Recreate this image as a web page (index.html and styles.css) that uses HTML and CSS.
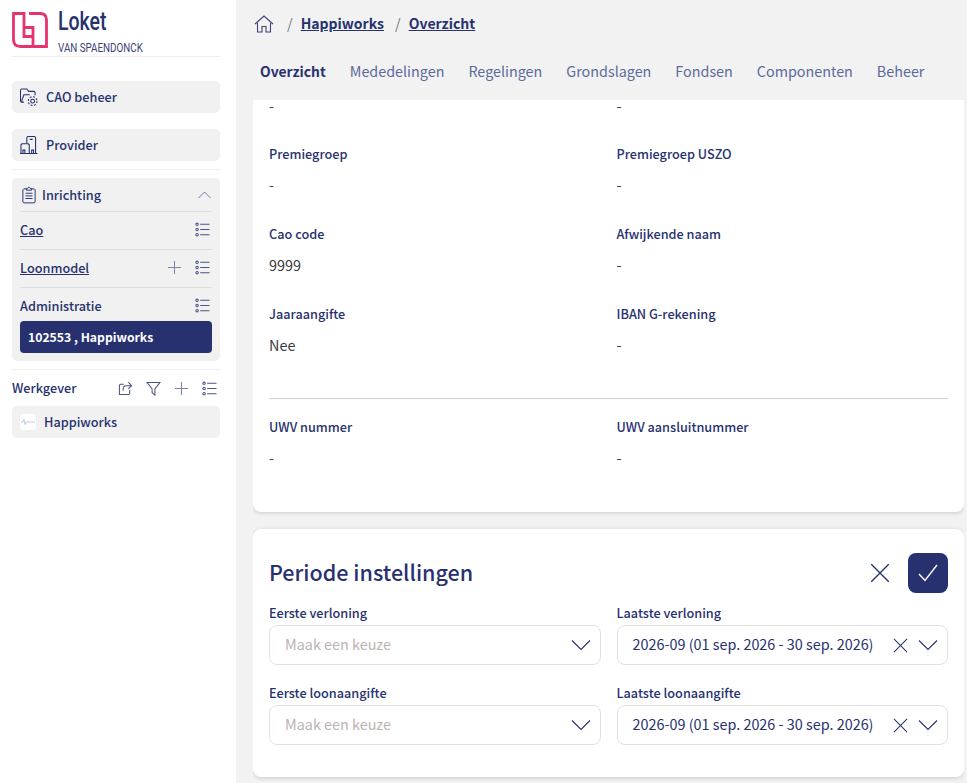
FILE: index.html
```html
<!DOCTYPE html>
<html lang="nl">
<head>
    <meta charset="UTF-8">
    <meta name="viewport" content="width=device-width, initial-scale=1.0">
    <title>Loket - Overzicht</title>
    <link rel="stylesheet" href="styles.css">
</head>
<body>

    <svg class="icon-defs" aria-hidden="true">
        <symbol id="i-list" viewBox="0 0 16 16">
            <circle cx="2.2" cy="2.5" r="1.3"/><circle cx="2.2" cy="8" r="1.3"/><circle cx="2.2" cy="13.5" r="1.3"/>
            <path d="M5.5 2.5H15.5M5.5 8H15.5M5.5 13.5H15.5"/>
        </symbol>
        <symbol id="i-plus" viewBox="0 0 16 16">
            <path d="M8 1V15M1 8H15"/>
        </symbol>
        <symbol id="i-close" viewBox="0 0 16 16">
            <path d="M1 1L15 15M15 1L1 15"/>
        </symbol>
        <symbol id="i-chevron" viewBox="0 0 20 12">
            <path d="M1 1.5L10 10.5L19 1.5"/>
        </symbol>
    </svg>

    <aside class="sidebar">
        <div class="logo">
            <svg class="logo-mark" viewBox="0 0 36 36">
                <path d="M12 15.5V1.5H1.5V27.5Q1.5 34.5 8.5 34.5H21V15.5H12V24.5H21"/>
                <path d="M17 1.5H28Q34.5 1.5 34.5 8V34.5H21"/>
            </svg>
            <div class="logo-text">
                <div class="logo-name">Loket</div>
                <div class="logo-sub">VAN SPAENDONCK</div>
            </div>
        </div>

        <a class="nav-item nav-first">
            <svg class="nav-icon" viewBox="1 0.5 18.5 18.5">
                <path d="M5 15H2.5L1.5 14V2.5L2.5 1.5H8L10 4H15.5L16.5 5V8"/>
                <path d="M2.5 14.5L5 7.5H11"/>
                <circle cx="14" cy="14" r="2"/>
                <circle cx="14" cy="14" r="4.5" stroke-dasharray="2 1.5"/>
            </svg>
            CAO beheer
        </a>
        <a class="nav-item nav-second">
            <svg class="nav-icon" viewBox="1 0.5 18.5 18.5">
                <path d="M1 18.5H19"/>
                <path d="M2 18V9.5L3 8.5H9.5L10.5 9.5V18"/>
                <path d="M8 8V2L9 1H16L17 2V18"/>
                <path d="M4 18V15H6V18M13 18V15H15V18M11 4H14"/>
            </svg>
            Provider
        </a>

        <hr class="side-rule">

        <section class="panel">
            <div class="panel-head">
                <span class="panel-title">
                    <svg class="clip-icon" viewBox="0 0 16 20">
                        <path d="M5 3H2L1 4V18L2 19H14L15 18V4L14 3H11"/>
                        <path d="M5 4.5V2.5H6.5Q7 1 8 1T9.5 2.5H11V4.5Z"/>
                        <path d="M4 8H12M4 11H12M4 14H12"/>
                    </svg>
                    Inrichting
                </span>
                <svg class="chevron-up" viewBox="0 0 20 12"><use href="#i-chevron"/></svg>
            </div>
            <div class="panel-row">
                <a class="panel-link">Cao</a>
                <svg class="tool"><use href="#i-list"/></svg>
            </div>
            <div class="panel-row">
                <a class="panel-link">Loonmodel</a>
                <span class="tools">
                    <svg class="tool tool-light"><use href="#i-plus"/></svg>
                    <svg class="tool"><use href="#i-list"/></svg>
                </span>
            </div>
            <div class="panel-row panel-row-last">
                <span>Administratie</span>
                <svg class="tool"><use href="#i-list"/></svg>
            </div>
            <div class="panel-selected">102553 , Happiworks</div>
        </section>

        <hr class="side-rule">

        <div class="employer-head">
            <span>Werkgever</span>
            <span class="tools">
                <svg class="tool" viewBox="0 0 16 16">
                    <path d="M6 3.5H2.5L1.5 4.5V14.5H11.5L12.5 13.5V9.5"/>
                    <path d="M5.5 10.5V8.5Q5.5 5 9 5H14M11 1.5L14.5 5L11 8.5"/>
                </svg>
                <svg class="tool" viewBox="0 0 16 16">
                    <path d="M1 1.5H15L9.5 8.5V15L6.5 12.5V8.5Z"/>
                </svg>
                <svg class="tool tool-light"><use href="#i-plus"/></svg>
                <svg class="tool"><use href="#i-list"/></svg>
            </span>
        </div>
        <a class="nav-item employer">
            <span class="employer-logo">
                <svg viewBox="0 0 16 16">
                    <path class="wave-a" d="M1 8H3L4 5.5L5 10.5L6 8"/>
                    <path class="wave-b" d="M6 8H15"/>
                </svg>
            </span>
            Happiworks
        </a>
    </aside>

    <main class="main">
        <nav class="breadcrumb">
            <svg class="home-icon" viewBox="0 0 20 18">
                <path d="M1 9L10 1L19 9"/>
                <path d="M3.5 8V17H8V11.5H12V17H16.5V8"/>
            </svg>
            <span class="crumb-sep">/</span>
            <a>Happiworks</a>
            <span class="crumb-sep">/</span>
            <a>Overzicht</a>
        </nav>

        <nav class="tabs">
            <a class="tab tab-active">Overzicht</a>
            <a class="tab">Mededelingen</a>
            <a class="tab">Regelingen</a>
            <a class="tab">Grondslagen</a>
            <a class="tab">Fondsen</a>
            <a class="tab">Componenten</a>
            <a class="tab">Beheer</a>
        </nav>

        <div class="content">
            <section class="card card-details">
                <div class="fields fields-cut">
                    <div class="value">-</div>
                    <div class="value">-</div>
                </div>
                <div class="fields">
                    <div class="field"><div class="label">Premiegroep</div><div class="value">-</div></div>
                    <div class="field"><div class="label">Premiegroep USZO</div><div class="value">-</div></div>
                    <div class="field"><div class="label">Cao code</div><div class="value">9999</div></div>
                    <div class="field"><div class="label">Afwijkende naam</div><div class="value">-</div></div>
                    <div class="field"><div class="label">Jaaraangifte</div><div class="value">Nee</div></div>
                    <div class="field"><div class="label">IBAN G-rekening</div><div class="value">-</div></div>
                </div>
                <hr class="rule">
                <div class="fields">
                    <div class="field"><div class="label">UWV nummer</div><div class="value">-</div></div>
                    <div class="field"><div class="label">UWV aansluitnummer</div><div class="value">-</div></div>
                </div>
            </section>

            <section class="card card-period">
                <div class="card-head">
                    <h2>Periode instellingen</h2>
                    <div class="card-actions">
                        <svg class="action-close"><use href="#i-close"/></svg>
                        <button class="action-save" type="button">
                            <svg viewBox="0 0 20 18"><path d="M1 10L7 16.5L19 1"/></svg>
                        </button>
                    </div>
                </div>
                <div class="form-grid">
                    <div>
                        <div class="label">Eerste verloning</div>
                        <div class="select">
                            <span class="placeholder">Maak een keuze</span>
                            <svg class="select-chevron"><use href="#i-chevron"/></svg>
                        </div>
                    </div>
                    <div>
                        <div class="label">Laatste verloning</div>
                        <div class="select">
                            <span class="select-text">2026-09 (01 sep. 2026 - 30 sep. 2026)</span>
                            <span class="select-tools">
                                <svg class="select-clear"><use href="#i-close"/></svg>
                                <svg class="select-chevron"><use href="#i-chevron"/></svg>
                            </span>
                        </div>
                    </div>
                    <div>
                        <div class="label">Eerste loonaangifte</div>
                        <div class="select">
                            <span class="placeholder">Maak een keuze</span>
                            <svg class="select-chevron"><use href="#i-chevron"/></svg>
                        </div>
                    </div>
                    <div>
                        <div class="label">Laatste loonaangifte</div>
                        <div class="select">
                            <span class="select-text">2026-09 (01 sep. 2026 - 30 sep. 2026)</span>
                            <span class="select-tools">
                                <svg class="select-clear"><use href="#i-close"/></svg>
                                <svg class="select-chevron"><use href="#i-chevron"/></svg>
                            </span>
                        </div>
                    </div>
                </div>
            </section>
        </div>
    </main>

</body>
</html>
```

FILE: styles.css
```css
* {
    box-sizing: border-box;
}

body {
    margin: 0;
    height: 100vh;
    display: flex;
    overflow: hidden;
    background-color: #f2f2f2;
    color: #27316f;
    font-family: "Noto Sans CJK SC", "Noto Sans", sans-serif;
    font-size: 12.7px;
    line-height: 20px;
}

svg {
    fill: none;
    stroke: #27316f;
    stroke-width: 1.1;
    flex-shrink: 0;
    display: block;
}

.icon-defs {
    width: 0;
    height: 0;
    position: absolute;
}

/* sidebar */
.sidebar {
    width: 236px;
    flex-shrink: 0;
    height: 100%;
    padding: 0 16px 0 12px;
    background-color: #fff;
    font-weight: 500;
}

.logo {
    height: 57px;
    display: flex;
    gap: 10px;
    padding-top: 12px;
    border-bottom: 1px solid #eee;
}

.logo-mark {
    width: 36px;
    height: 36px;
    stroke: #e6336f;
    stroke-width: 2.8;
}

.logo-text {
    transform: scaleX(0.78);
    transform-origin: left;
    font-family: "Roboto", sans-serif;
    white-space: nowrap;
}

.logo-name {
    font-size: 25px;
    line-height: 24px;
    margin-top: -2px;
    font-weight: 500;
}

.logo-sub {
    font-size: 12.6px;
    line-height: 14px;
    margin-top: 7px;
    font-weight: 400;
    color: #3a4479;
}

.nav-item {
    height: 32px;
    display: flex;
    align-items: center;
    gap: 8px;
    padding-left: 8px;
    background-color: #f1f1f1;
    border-radius: 5px;
}

.nav-first {
    margin-top: 24px;
}

.nav-second {
    margin-top: 16px;
}

.nav-icon {
    width: 18px;
    height: 18px;
}

.side-rule {
    margin: 8px 0;
    border: 0;
    border-top: 1px solid #eee;
}

.panel {
    padding: 0 8px 8px;
    background-color: #f1f1f1;
    border-radius: 5px;
}

.panel-head {
    height: 34px;
    display: flex;
    align-items: center;
    justify-content: space-between;
    border-bottom: 1px solid #ddd;
}

.panel-title {
    display: flex;
    align-items: center;
    gap: 6px;
    padding-left: 2px;
}

.clip-icon {
    width: 14px;
    height: 18px;
}

.chevron-up {
    width: 15px;
    height: 8px;
    transform: scaleY(-1);
    stroke: #4a5486;
}

.panel-row {
    height: 38px;
    display: flex;
    align-items: center;
    justify-content: space-between;
    border-bottom: 1px solid #ddd;
    padding: 0 2px 2px 0;
}

.panel-row-last {
    height: 33px;
    border-bottom: 0;
    padding: 2px 2px 0 0;
}

.panel-link {
    text-decoration: underline;
}

.panel-selected {
    height: 32px;
    display: flex;
    align-items: center;
    padding-left: 8px;
    background-color: #27316f;
    border-radius: 4px;
    color: #fff;
    font-size: 12.2px;
    font-weight: 700;
}

.tools {
    display: flex;
    align-items: center;
    gap: 13px;
}

.tool {
    width: 15px;
    height: 15px;
    stroke: #4a5486;
}

.tool-light {
    stroke: #7c85aa;
}

.employer-head {
    height: 27px;
    margin-top: -8px;
    margin-bottom: 9px;
    padding: 9px 3px 0 0;
    display: flex;
    align-items: center;
    justify-content: space-between;
}

.employer {
    gap: 8px;
}

.employer-logo {
    width: 16px;
    height: 16px;
    background-color: #fff;
    border-radius: 3px;
}

.wave-a {
    stroke: #9cc4ee;
    stroke-width: 0.8;
}

.wave-b {
    stroke: #e2b6ee;
    stroke-width: 1;
}

/* main */
.main {
    flex: 1;
    min-width: 0;
    height: 100%;
    display: flex;
    flex-direction: column;
    padding: 0 3px 0 17px;
}

.breadcrumb {
    height: 48px;
    padding-bottom: 2px;
    display: flex;
    align-items: center;
    font-size: 14px;
    font-weight: 700;
}

.breadcrumb a {
    text-decoration: underline;
}

.home-icon {
    width: 20px;
    height: 18px;
    margin: 2px 2px 0 1px;
    stroke: #3a4479;
}

.crumb-sep {
    margin: 0 8px 0 11px;
    font-size: 14.4px;
    font-weight: 400;
    color: #777;
}

.tabs {
    height: 52px;
    display: flex;
    gap: 24px;
    padding: 0 0 6px 7px;
    align-items: center;
    font-size: 14.35px;
}

.tab {
    color: #5c6a9a;
}

.tab-active {
    color: #27316f;
    font-size: 13.85px;
    font-weight: 700;
}

.content {
    flex: 1;
    min-height: 0;
    overflow: hidden;
}

.card {
    background-color: #fff;
    border-radius: 8px;
    box-shadow: 0 1px 4px rgba(0, 0, 0, 0.16);
    padding: 0 16px;
}

.card-details {
    height: 412px;
    border-radius: 0 0 8px 8px;
}

.fields {
    display: grid;
    grid-template-columns: 1fr 1fr;
    column-gap: 16px;
    row-gap: 27px;
}

.fields-cut {
    height: 44px;
}

.label {
    font-weight: 500;
    line-height: 20px;
}

.value {
    font-size: 14.4px;
    line-height: 24px;
    margin-top: 9px;
    color: #3a3a3a;
}

.fields-cut .value {
    margin-top: 0;
    line-height: 12px;
}

.rule {
    margin: 41px 0 18px;
    border: 0;
    border-top: 1px solid #ccc;
}

.card-period {
    margin-top: 17px;
    height: 248px;
    padding-top: 24px;
}

.card-head {
    height: 40px;
    display: flex;
    align-items: center;
    justify-content: space-between;
}

h2 {
    margin: 0 0 2px;
    font-size: 21.5px;
    line-height: 38px;
    font-weight: 500;
}

.card-actions {
    display: flex;
    align-items: center;
    gap: 18px;
}

.action-close {
    width: 20px;
    height: 20px;
}

.action-save {
    width: 40px;
    height: 40px;
    padding: 0;
    display: flex;
    align-items: center;
    justify-content: center;
    background-color: #27316f;
    border: 0;
    border-radius: 8px;
}

.action-save svg {
    width: 20px;
    height: 18px;
    stroke: #fff;
    stroke-width: 1.4;
}

.form-grid {
    display: grid;
    grid-template-columns: 1fr 1fr;
    column-gap: 16px;
    row-gap: 18px;
    margin-top: 10px;
}

.select {
    height: 40px;
    margin-top: 2px;
    display: flex;
    align-items: center;
    justify-content: space-between;
    padding: 0 9px 0 15px;
    border: 1px solid #e2e2e2;
    border-radius: 8px;
    font-size: 14.4px;
    white-space: nowrap;
}

.placeholder,
.select-text {
    margin-bottom: 2px;
}

.placeholder {
    color: #bdb3b3;
}

.select-tools {
    display: flex;
    align-items: center;
    gap: 10px;
}

.select-chevron {
    width: 20px;
    height: 12px;
}

.select-clear {
    width: 15px;
    height: 15px;
}
```
